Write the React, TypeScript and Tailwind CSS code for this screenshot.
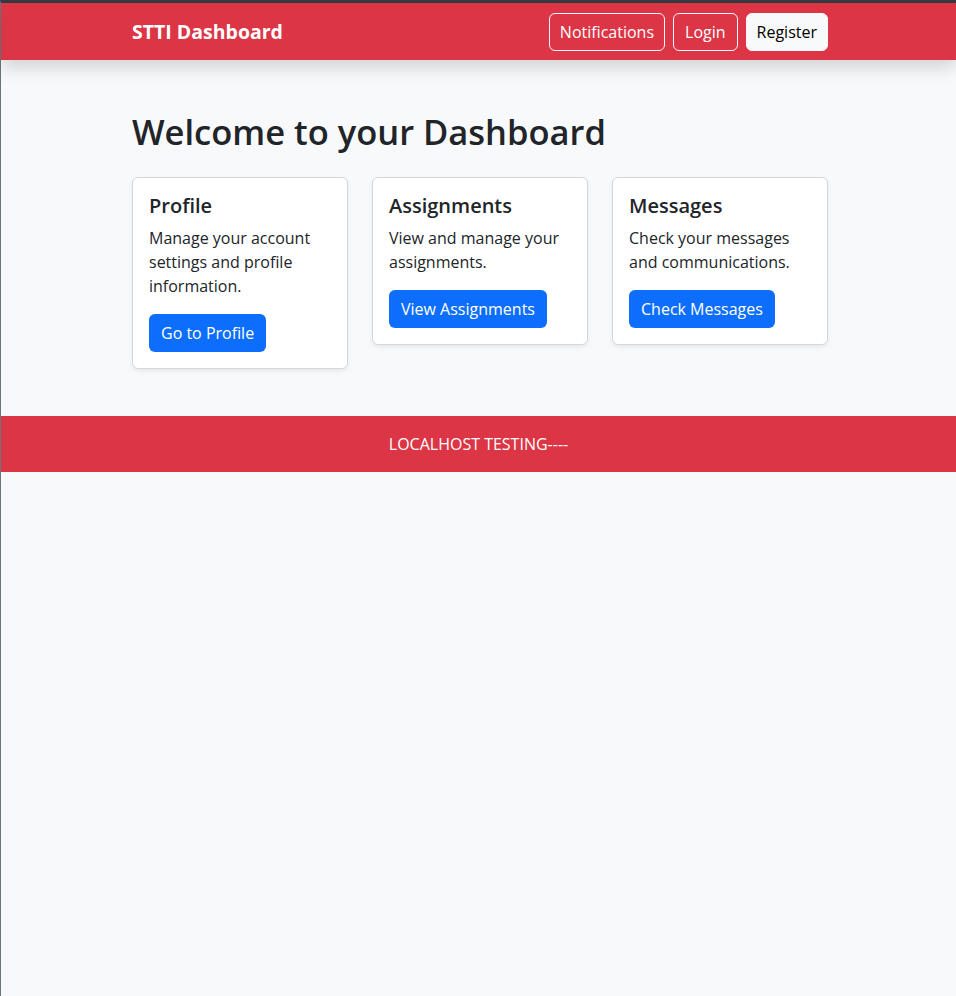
const font = { fontFamily: '"Open Sans", "Noto Sans", "Liberation Sans", sans-serif' }

function NavButton({ label, variant, pad = 'px-[10px]' }: { label: string; variant: 'outline' | 'light'; pad?: string }) {
  const cls =
    variant === 'outline'
      ? 'border border-[#f8f9fa] text-white'
      : 'border border-[#f8f9fa] bg-[#f8f9fa] text-[#000]'
  return (
    <button className={`h-[38px] ${pad} rounded-md text-[16px] leading-6 ${cls}`}>{label}</button>
  )
}

function Card({ title, text, action }: { title: string; text: string; action: string }) {
  return (
    <div className="w-[216px] shrink-0 bg-white border border-[#d6d7d9] rounded-md shadow-[0_2px_4px_rgba(0,0,0,0.075)] p-4 self-start">
      <h5 className="text-[20px] leading-6 font-semibold text-[#212529] mb-2">{title}</h5>
      <p className="text-[16px] leading-6 text-[#212529] mb-4">{text}</p>
      <button className="h-[38px] px-3 rounded-md bg-[#0d6efd] text-white text-[16px] leading-6">
        {action}
      </button>
    </div>
  )
}

export default function App() {
  return (
    <div style={font} className="min-h-[996px] bg-[#f8f9fa] border-t-[3px] border-t-[#343a40] border-l border-l-[#6c757d]">
      <nav className="relative z-10 h-[57px] bg-[#dc3545] shadow-[0_8px_16px_rgba(0,0,0,0.15)] pl-[3px]">
        <div className="w-[696px] mx-auto h-full flex items-center justify-between">
          <span className="text-white text-[19.5px] font-bold">STTI Dashboard</span>
          <div className="flex gap-2">
            <NavButton label="Notifications" variant="outline" />
            <NavButton label="Login" variant="outline" pad="px-[11px]" />
            <NavButton label="Register" variant="light" />
          </div>
        </div>
      </nav>

      <div className="pl-[3px]">
        <main className="w-[696px] mx-auto pt-[51px]">
          <h1 className="text-[34.5px] leading-[1.2] font-semibold text-[#212529] mb-[25px]">
            Welcome to your Dashboard
          </h1>
          <div className="flex gap-6">
            <Card title="Profile" text="Manage your account settings and profile information." action="Go to Profile" />
            <Card title="Assignments" text="View and manage your assignments." action="View Assignments" />
            <Card title="Messages" text="Check your messages and communications." action="Check Messages" />
          </div>
        </main>
      </div>

      <footer className="mt-[47px] h-14 bg-[#dc3545] flex items-center justify-center text-white text-[16px]">
        LOCALHOST TESTING----
      </footer>
    </div>
  )
}
